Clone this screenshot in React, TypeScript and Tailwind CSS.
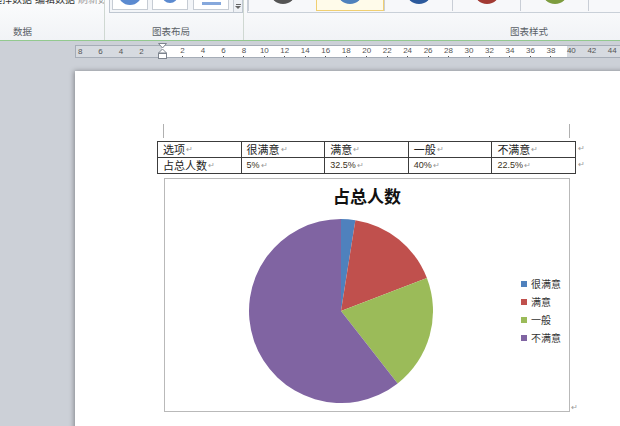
import React from "react";

const PM = () => <span className="text-[8px] text-[#9a9a9a] leading-none ml-[1px]">↵</span>;

function arc(a0: number, a1: number, r = 92) {
  const p = (d: number) => {
    const t = (d * Math.PI) / 180;
    return [r + r * Math.sin(t), r - r * Math.cos(t)];
  };
  const [x0, y0] = p(a0);
  const [x1, y1] = p(a1);
  const large = a1 - a0 > 180 ? 1 : 0;
  return `M${r},${r} L${x0.toFixed(2)},${y0.toFixed(2)} A${r},${r} 0 ${large} 1 ${x1.toFixed(2)},${y1.toFixed(2)} Z`;
}

const slices = [
  { a0: 0, a1: 9, c: "#4f81bd" },
  { a0: 9, a1: 69, c: "#c0504d" },
  { a0: 69, a1: 142, c: "#9bbb59" },
  { a0: 142, a1: 360, c: "#8064a2" },
];

const legend = [
  { c: "#4f81bd", t: "很满意" },
  { c: "#c0504d", t: "满意" },
  { c: "#9bbb59", t: "一般" },
  { c: "#8064a2", t: "不满意" },
];

const rightNums = [2, 4, 6, 8, 10, 12, 14, 16, 18, 20, 22, 24, 26, 28, 30, 32, 34, 36, 38, 40, 42, 44];

export default function App() {
  return (
    <div className="w-[620px] h-[426px] overflow-hidden bg-[#ccd0d7] font-['Liberation_Sans','Noto_Sans_CJK_SC',sans-serif] text-[#222]">
      {/* Ribbon */}
      <div className="h-[41px] bg-[linear-gradient(#fbfcfd,#f1f3f6)] border-b border-[#93c98f] flex">
        {/* Data group */}
        <div className="w-[105px] border-r border-[#cfd8d2] flex flex-col">
          <div className="h-[5px] overflow-hidden flex gap-[3px] text-[10px] leading-[10px] whitespace-nowrap -ml-[8px]">
            <span className="-mt-[5px] text-[#333]">选择数据</span>
            <span className="-mt-[5px] text-[#333]">编辑数据</span>
            <span className="-mt-[5px] text-[#9a9a9a]">刷新数据</span>
          </div>
          <div className="flex-1" />
          <div className="h-[14px] pl-[13px] text-[9.5px] text-[#5a5f66] leading-[12px]">数据</div>
        </div>
        {/* Layout group */}
        <div className="w-[145px] border-r border-[#cfd8d2] flex flex-col">
          <div className="ml-[4px] w-[134px] h-[13px] border border-t-0 border-[#bfc7d1] bg-[#f3f5f8] flex">
            <div className="ml-[2px] w-[36px] h-[10px] border border-t-0 border-[#c6ccd4] bg-white overflow-hidden flex justify-center">
              <div className="w-[24px] h-[24px] rounded-full bg-[#5b8ad0] -mt-[19px]" />
            </div>
            <div className="ml-[4px] w-[36px] h-[10px] border border-t-0 border-[#c6ccd4] bg-white overflow-hidden flex justify-center">
              <div className="w-[16px] h-[16px] rounded-full bg-[#5b8ad0] -mt-[13px]" />
            </div>
            <div className="ml-[5px] w-[36px] h-[10px] border border-t-0 border-[#c6ccd4] bg-white overflow-hidden flex justify-center items-start">
              <div className="w-[19px] h-[3px] bg-[#86a8dc] mt-[2px]" />
            </div>
            <div className="ml-auto w-[9px] h-full border-l border-[#c6ccd4] bg-[#eef1f5] flex flex-col items-center justify-center">
              <div className="w-[5px] h-px bg-[#666]" />
              <div className="mt-[1px] w-0 h-0 border-l-[3px] border-r-[3px] border-t-[3px] border-l-transparent border-r-transparent border-t-[#666]" />
            </div>
          </div>
          <div className="flex-1" />
          <div className="h-[14px] text-center text-[9.5px] text-[#5a5f66] leading-[12px] pr-[6px]">图表布局</div>
        </div>
        {/* Style group */}
        <div className="flex-1 flex flex-col">
          <div className="ml-[3px] h-[13px] border-b border-l border-[#c9d0d8] bg-[#f7f8fa] flex">
            {[
              { c: "#555555", sel: false },
              { c: "#4f81bd", sel: true },
              { c: "#2c5a9c", sel: false },
              { c: "#a23a33", sel: false },
              { c: "#7d9c3e", sel: false },
              { c: "#888", sel: false },
            ].map((g, i) => (
              <div
                key={i}
                className={
                  g.sel
                    ? "w-[68px] h-[11px] shrink-0 border border-t-0 border-[#f0cf72] bg-[#fffbea] overflow-hidden flex justify-center"
                    : "w-[68px] h-[11px] shrink-0 border-l border-[#c9ced6] overflow-hidden flex justify-center"
                }
              >
                {i < 5 && (
                  <div
                    className="w-[26px] h-[26px] rounded-full -mt-[22px] shrink-0"
                    style={{
                      background:
                        i === 1
                          ? "conic-gradient(#4f81bd 0deg 260deg, #c0504d 260deg 330deg, #4f81bd 330deg)"
                          : g.c,
                    }}
                  />
                )}
              </div>
            ))}
          </div>
          <div className="flex-1" />
          <div className="h-[14px] pl-[266px] text-[9.5px] text-[#5a5f66] leading-[12px] whitespace-nowrap">图表样式</div>
        </div>
      </div>

      {/* Ruler */}
      <div className="mt-[4px] h-[13px] flex relative">
        <div className="w-[75px] shrink-0" />
        <div className="w-[87px] shrink-0 h-full border border-r-0 border-[#a6adb7] bg-[#d6dae0] flex justify-end pr-[10.24px]">
          {[8, 6, 4, 2].map((n) => (
            <div key={n} className="w-[20.48px] shrink-0 text-center text-[8px] leading-[11px] text-[#555]">{n}</div>
          ))}
        </div>
        <div className="flex-1 h-full border-y border-[#a6adb7] bg-[linear-gradient(to_right,#ffffff_405px,#d6dae0_405px)] flex pl-[10.24px] overflow-hidden">
          {rightNums.map((n) => (
            <div key={n} className="w-[20.48px] shrink-0 flex flex-col items-center">
              <span className="text-[8px] leading-[8px] text-[#555] mt-[1px]">{n}</span>
              {n <= 38 && <span className="w-px h-[2px] bg-[#555] mt-[1px]" />}
            </div>
          ))}
        </div>
        <svg className="absolute left-[158px] -top-[2px]" width="9" height="16" viewBox="0 0 9 16">
          <path d="M0.5,0.5 H8.5 L4.5,5 Z" fill="#fff" stroke="#7d848e" />
          <path d="M4.5,6 L8.5,10 H0.5 Z" fill="#fff" stroke="#7d848e" />
          <rect x="0.5" y="10.5" width="8" height="5" fill="#fff" stroke="#7d848e" />
        </svg>
      </div>

      {/* Page */}
      <div className="mt-[13px] ml-[75px] w-[560px] h-[400px] bg-white shadow-[-1px_0_5px_rgba(0,0,0,0.35)] pt-[53px] pl-[82px]">
        <div className="ml-[6px] w-[407px] h-[14px] flex justify-between">
          <div className="w-px h-full bg-[#b0b0b0]" />
          <div className="w-px h-full bg-[#b0b0b0]" />
        </div>
        <div className="mt-[3px] flex">
          <div className="w-[419px] border border-[#3c3c3c] text-[11px] leading-[15px]">
            <div className="flex h-[16px] border-b border-[#3c3c3c]">
              {["选项", "很满意", "满意", "一般", "不满意"].map((t, i) => (
                <div key={i} className={`flex-1 pl-[5px] flex items-center ${i < 4 ? "border-r border-[#3c3c3c]" : ""}`}>
                  <span className="font-['Noto_Sans_CJK_SC',sans-serif]">{t}</span>
                  <PM />
                </div>
              ))}
            </div>
            <div className="flex h-[15px]">
              {["占总人数", "5%", "32.5%", "40%", "22.5%"].map((t, i) => (
                <div key={i} className={`flex-1 pl-[5px] flex items-center ${i < 4 ? "border-r border-[#3c3c3c]" : ""}`}>
                  {i === 0 ? (
                    <span className="font-['Noto_Sans_CJK_SC',sans-serif]">{t}</span>
                  ) : (
                    <span className="text-[9px] text-[#3a3020]">{t}</span>
                  )}
                  <PM />
                </div>
              ))}
            </div>
          </div>
          <div className="flex flex-col ml-[1px]">
            <div className="h-[16px] flex items-center"><PM /></div>
            <div className="h-[16px] flex items-center"><PM /></div>
          </div>
        </div>
        <div className="mt-[4px] flex items-end">
          <div className="ml-[7px] w-[406px] h-[234px] border border-[#b9b9b9] flex flex-col">
            <div className="pt-[6px] h-[28px] text-center text-[17px] leading-[22px] font-bold font-['Noto_Sans_CJK_SC',serif] text-[#111]">
              占总人数
            </div>
            <div className="mt-[12px] flex">
              <svg className="ml-[84px] shrink-0" width="184" height="184" viewBox="0 0 184 184">
                {slices.map((s, i) => (
                  <path key={i} d={arc(s.a0, s.a1)} fill={s.c} />
                ))}
              </svg>
              <div className="ml-[88px] self-center flex flex-col">
                {legend.map((l) => (
                  <div key={l.t} className="h-[18px] flex items-center">
                    <span className="w-[6px] h-[6px] shrink-0" style={{ background: l.c }} />
                    <span className="ml-[4px] text-[10px] leading-[12px] text-[#333] font-['Noto_Sans_CJK_SC',sans-serif]">{l.t}</span>
                  </div>
                ))}
              </div>
            </div>
          </div>
          <PM />
        </div>
      </div>
    </div>
  );
}
